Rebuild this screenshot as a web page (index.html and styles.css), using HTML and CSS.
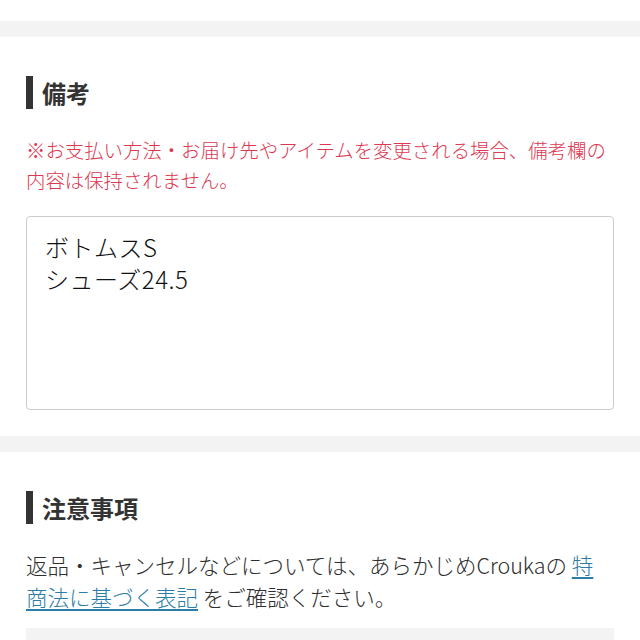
FILE: index.html
```html
<!DOCTYPE html>
<html lang="ja">
<head>
<meta charset="utf-8">
<title>備考</title>
<link rel="stylesheet" href="styles.css">
</head>
<body>
<div class="top-space"></div>
<div class="divider"></div>
<section class="section">
  <h2 class="heading"><span class="bar"></span><span class="heading-text">備考</span></h2>
  <p class="note">※お支払い方法・お届け先やアイテムを変更される場合、備考欄の内容は保持されません。</p>
  <textarea class="memo">ボトムスS
シューズ24.5</textarea>
</section>
<div class="divider"></div>
<section class="section">
  <h2 class="heading"><span class="bar"></span><span class="heading-text">注意事項</span></h2>
  <p class="body-text">返品・キャンセルなどについては、あらかじめCroukaの <a class="link" href="#">特商法に基づく表記</a> をご確認ください。</p>
  <div class="gray-box"></div>
</section>
</body>
</html>
```

FILE: styles.css
```css
html, body {
  margin: 0;
  padding: 0;
  background: #ffffff;
}
body {
  font-family: "Noto Sans CJK JP", "Noto Sans", sans-serif;
  color: #333333;
}
.top-space {
  height: 21px;
}
.divider {
  height: 16px;
  background: #f3f3f3;
}
.section {
  padding: 39px 26px 26px 26px;
}
.heading {
  display: flex;
  align-items: center;
  gap: 9px;
  margin: 0;
  height: 33px;
}
.bar {
  width: 7px;
  height: 33px;
  background: #333333;
  flex: none;
}
.heading-text {
  font-size: 24px;
  font-weight: 700;
  line-height: 33px;
  color: #333333;
}
.note {
  margin: 26px 0 0 0;
  font-size: 19.4px;
  font-weight: 300;
  line-height: 30px;
  color: #dc3852;
}
.memo {
  display: block;
  box-sizing: border-box;
  width: 100%;
  height: 194px;
  margin: 21px 0 0 0;
  padding: 14px 18px;
  border: 1px solid #cccccc;
  border-radius: 4px;
  resize: none;
  font-family: "Noto Sans CJK JP", "Noto Sans", sans-serif;
  font-size: 24px;
  font-weight: 300;
  line-height: 32px;
  letter-spacing: 0.5px;
  color: #111111;
  background: #ffffff;
  outline: none;
}
.body-text {
  margin: 25px 0 0 0;
  font-size: 21.5px;
  font-weight: 300;
  line-height: 32px;
  color: #2e2e2e;
}
.link {
  color: #2b7ca6;
  text-decoration: underline;
  text-underline-offset: 3px;
}
.gray-box {
  margin-top: 15px;
  height: 40px;
  background: #f3f3f3;
}
```
